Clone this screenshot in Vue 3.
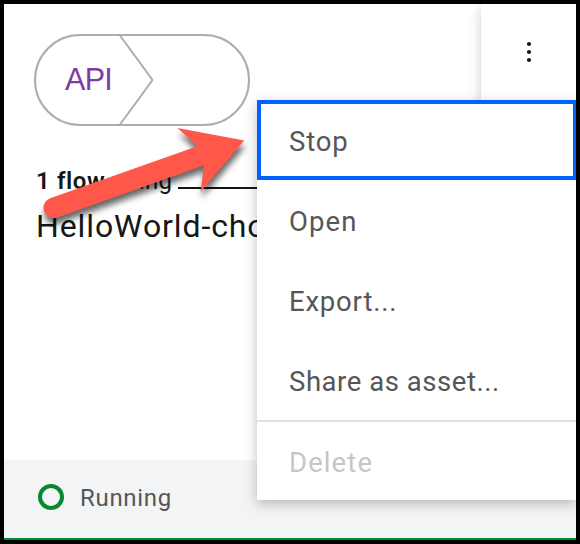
<script setup>
const items = [
  { id: 'stop', label: 'Stop', focused: true },
  { id: 'open', label: 'Open' },
  { id: 'export', label: 'Export...' },
  { id: 'share', label: 'Share as asset...' },
  { id: 'delete', label: 'Delete', disabled: true },
]
</script>

<template>
  <main class="frame">
    <section class="card">
      <header class="top">
        <svg class="badge" viewBox="0 0 216 92" width="216" height="92">
          <rect x="1" y="1" width="214" height="90" rx="45" fill="none" stroke="#adadad" stroke-width="2" />
          <path d="M86 1.5 L118.5 46 L86 90.500" fill="none" stroke="#adadad" stroke-width="2" />
          <text x="31" y="56" class="api">API</text>
        </svg>
        <div class="overflow">
          <svg width="6" height="22" viewBox="0 0 6 22" fill="#161616">
            <circle cx="3" cy="3" r="2.1" />
            <circle cx="3" cy="11" r="2.1" />
            <circle cx="3" cy="19" r="2.1" />
          </svg>
        </div>
      </header>
      <div class="usage"><b>1 flow</b><span>using</span><i class="blank"></i></div>
      <h1 class="title">HelloWorld-cho</h1>
      <footer class="status">
        <svg width="26" height="26" viewBox="0 0 26 26">
          <circle cx="13" cy="13" r="11" fill="none" stroke="#05882f" stroke-width="4" />
        </svg>
        <span>Running</span>
      </footer>
    </section>
    <div class="menu">
      <div
        v-for="item in items"
        :key="item.id"
        class="item"
        :class="[item.id, { focused: item.focused, disabled: item.disabled }]"
      >{{ item.label }}</div>
    </div>
    <svg class="arrow" width="580" height="544" viewBox="0 0 580 544">
      <path
        d="M49.500 198.500 L197.300 146.200 L177.500 128 L244.200 140.400 L200.700 191.800 L204 165.300 L58 217.200 A10 10 0 0 1 49.500 198.500 Z"
        fill="#ff584a"
      />
    </svg>
  </main>
</template>

<style>
body { margin: 0; background: #000; }
</style>

<style scoped>
.frame {
  position: relative;
  box-sizing: border-box;
  width: 580px;
  height: 544px;
  padding: 4px;
  overflow: hidden;
  background: #000;
  font-family: Roboto, "Liberation Sans", sans-serif;
}
.card {
  display: flex;
  flex-direction: column;
  box-sizing: border-box;
  height: 536px;
  overflow: hidden;
  background: #fff;
  border-bottom: 2px solid #05882f;
}
.top {
  display: flex;
  justify-content: space-between;
  height: 160px;
  flex: none;
}
.badge { margin: 30px 0 0 30px; }
.api {
  font-family: "Liberation Sans", Arial, sans-serif;
  font-size: 30.500px;
  letter-spacing: -0.7px;
  fill: #7d3c9e;
}
.overflow {
  display: flex;
  justify-content: center;
  box-sizing: border-box;
  width: 95px;
  height: 140px;
  padding-top: 37px;
  background: #fff;
  box-shadow: 0 4px 12px rgba(0, 0, 0, 0.2);
}
.usage {
  display: flex;
  height: 34px;
  flex: none;
  padding-left: 32px;
  font-size: 24px;
  line-height: 34px;
  color: #161616;
}
.usage b { width: 77px; font-weight: 600; letter-spacing: 0.6px; }
.usage span { width: 61px; letter-spacing: 0.2px; }
.blank { width: 120px; height: 2px; margin: 23px 0 0 4px; background: #161616; }
.title {
  height: 44px;
  flex: none;
  margin: 6px 0 0 32px;
  font-size: 32px;
  font-weight: 400;
  line-height: 44px;
  letter-spacing: 0.9px;
  white-space: nowrap;
  color: #161616;
}
.status {
  display: flex;
  align-items: center;
  height: 78px;
  box-sizing: border-box;
  margin-top: auto;
  padding: 0 0 4px 34px;
  gap: 16px;
  background: #f3f4f6;
  color: #565656;
  font-size: 24px;
  letter-spacing: 0.7px;
}
.status span { padding-top: 2px; }
.menu {
  position: absolute;
  top: 100px;
  left: 257px;
  width: 319px;
  height: 400px;
  background: #fff;
  box-shadow: 0 4px 12px rgba(0, 0, 0, 0.25);
}
.item {
  box-sizing: border-box;
  height: 80px;
  padding-left: 32px;
  font-size: 27.500px;
  line-height: 84px;
  letter-spacing: 0.8px;
  color: #565656;
}
.focused {
  padding-left: 28px;
  border: 4px solid #0062ff;
  border-right-width: 3px;
  line-height: 76px;
}
.open { letter-spacing: 1.1px; }
.share { letter-spacing: 0.55px; }
.disabled { border-top: 2px solid #e0e0e0; color: #c6c6c6; line-height: 82px; letter-spacing: 1.1px; }
.arrow {
  position: absolute;
  inset: 0;
  filter: drop-shadow(1px 6px 3px rgba(0, 0, 0, 0.6));
}
</style>
